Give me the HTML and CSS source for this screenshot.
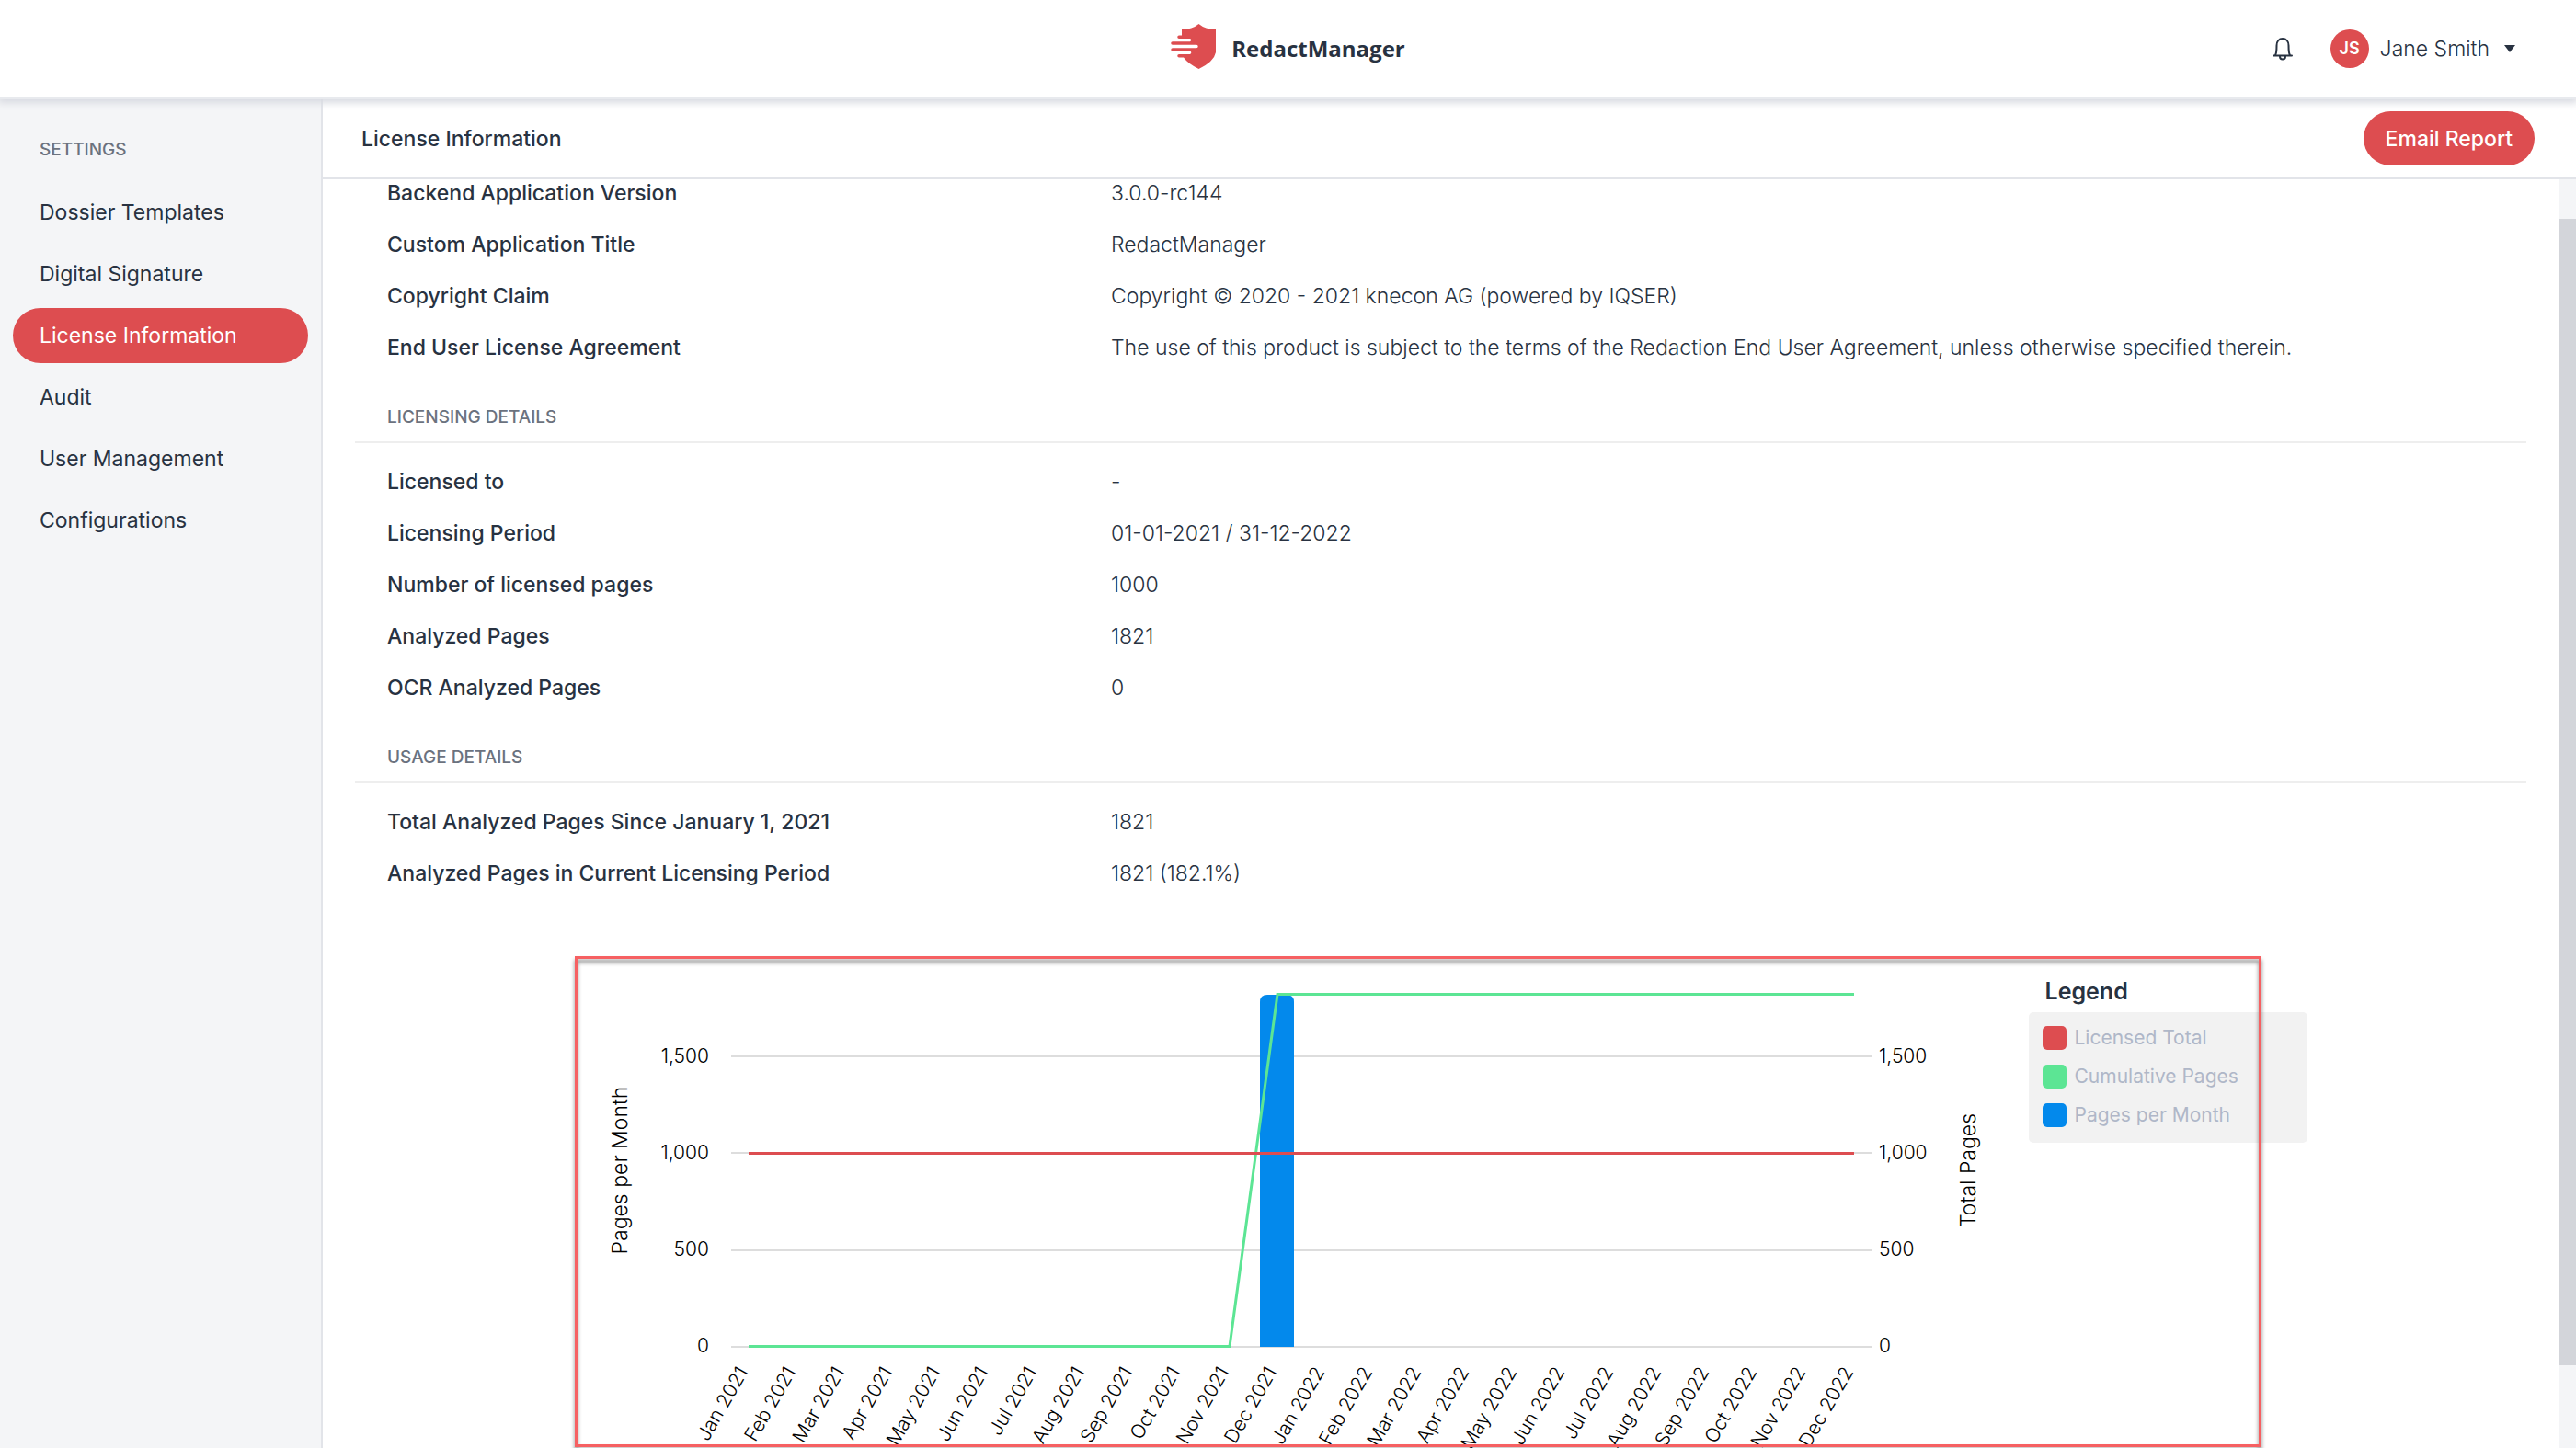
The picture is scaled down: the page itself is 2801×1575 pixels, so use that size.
FILE: index.html
```html
<!DOCTYPE html>
<html lang="en">
<head>
<meta charset="utf-8">
<title>License Information - RedactManager</title>
<link rel="stylesheet" href="styles.css">
</head>
<body>
<header class="topbar">
  <a class="brand" href="#">
    <svg class="brand-icon" viewBox="0 0 49 49" aria-hidden="true">
      <path fill="#dd4d50" d="M30.500 0Q37.500 6 49 6V31Q47 41 30.500 49Q18.500 43 14 36.500H9A1.700 1.700 0 0 1 9 33H21A1.700 1.700 0 0 0 21 29.700H2A1.700 1.700 0 0 1 2 26.200H28A1.700 1.700 0 0 0 28 22.800H2A1.700 1.700 0 0 1 2 19.200H21A1.700 1.700 0 0 0 21 16H9A1.700 1.700 0 0 1 9 12.500H12V6Q23.500 6 30.500 0Z"/>
    </svg>
    <span class="brand-name">RedactManager</span>
  </a>
  <div class="account">
    <button class="bell" type="button" aria-label="Notifications">
      <svg viewBox="0 0 24 26" width="24" height="26" fill="none" stroke="#283241" stroke-width="2" stroke-linejoin="round" stroke-linecap="round" aria-hidden="true">
        <path d="M2 20.500H22M4 20C5.500 18 5.500 15 5.500 9.500C5.500 5 8 2 12 2S18.500 5 18.500 9.500C18.500 15 18.500 18 20 20"/>
        <path d="M9 21.500A3 3 0 0 0 15 21.500"/>
      </svg>
    </button>
    <button class="user" type="button">
      <span class="avatar">JS</span>
      <span>Jane Smith</span>
      <svg class="caret" viewBox="0 0 12 8" width="12" height="8" aria-hidden="true"><path fill="#283241" d="M0 0H12L6 8Z"/></svg>
    </button>
  </div>
</header>
<div class="shell">
  <nav class="sidebar" aria-label="Settings">
    <h2 class="sidebar-title">SETTINGS</h2>
    <a class="nav-item" href="#">Dossier Templates</a>
    <a class="nav-item" href="#">Digital Signature</a>
    <a class="nav-item active" href="#" aria-current="page">License Information</a>
    <a class="nav-item" href="#">Audit</a>
    <a class="nav-item" href="#">User Management</a>
    <a class="nav-item" href="#">Configurations</a>
  </nav>
  <main class="main">
    <div class="page-header">
      <h1 class="page-title">License Information</h1>
      <button class="primary" type="button">Email Report</button>
    </div>
    <div class="viewport">
      <div class="content">
        <dl class="details">
          <dt>Backend Application Version</dt><dd>3.0.0-rc144</dd>
          <dt>Custom Application Title</dt><dd>RedactManager</dd>
          <dt>Copyright Claim</dt><dd>Copyright © 2020 - 2021 knecon AG (powered by IQSER)</dd>
          <dt>End User License Agreement</dt><dd>The use of this product is subject to the terms of the Redaction End User Agreement, unless otherwise specified therein.</dd>
        </dl>
        <h2 class="section-title">LICENSING DETAILS</h2>
        <dl class="details">
          <dt>Licensed to</dt><dd>-</dd>
          <dt>Licensing Period</dt><dd>01-01-2021 / 31-12-2022</dd>
          <dt>Number of licensed pages</dt><dd>1000</dd>
          <dt>Analyzed Pages</dt><dd>1821</dd>
          <dt>OCR Analyzed Pages</dt><dd>0</dd>
        </dl>
        <h2 class="section-title">USAGE DETAILS</h2>
        <dl class="details">
          <dt>Total Analyzed Pages Since January 1, 2021</dt><dd>1821</dd>
          <dt>Analyzed Pages in Current Licensing Period</dt><dd>1821 (182.1%)</dd>
        </dl>
        <div class="chart-area">
          <svg class="chart" viewBox="0 0 1581 540" role="img" aria-label="Pages per month and total pages">
            <g class="grid"><path d="M170 109H1410M170 214H1410M170 320H1410M170 425H1410"/></g>
            <path fill="#0389ec" d="M745 425V50Q745 42 753 42H774Q782 42 782 50V425Z"/>
            <path class="series green" d="M189 424.500H712L764 41.500H1391"/>
            <path class="series red" d="M189 214.500H1391"/>
            <g class="ticks end">
              <text x="146" y="116">1,500</text><text x="146" y="221">1,000</text><text x="146" y="326">500</text><text x="146" y="431">0</text>
            </g>
            <g class="ticks">
              <text x="1418" y="116">1,500</text><text x="1418" y="221">1,000</text><text x="1418" y="326">500</text><text x="1418" y="431">0</text>
            </g>
            <g class="axis-title">
              <text transform="translate(57 233) rotate(-90)">Pages per Month</text>
              <text transform="translate(1523 233) rotate(-90)">Total Pages</text>
            </g>
            <g class="ticks end" id="months"></g>
          </svg>
          <aside class="legend">
            <h3 class="legend-title">Legend</h3>
            <ul class="legend-list">
              <li><span class="swatch swatch-red"></span>Licensed Total</li>
              <li><span class="swatch swatch-green"></span>Cumulative Pages</li>
              <li><span class="swatch swatch-blue"></span>Pages per Month</li>
            </ul>
          </aside>
          <div class="highlight"></div>
        </div>
      </div>
      <div class="scroll-track"><div class="scroll-thumb"></div></div>
    </div>
  </main>
</div>
<script src="chart.js"></script>
</body>
</html>
```
FILE: styles.css
```css
* { box-sizing: border-box; }
body {
  margin: 0;
  height: 100vh;
  display: flex;
  flex-direction: column;
  overflow: hidden;
  background: #fff;
  color: #283241;
  font-family: Inter, "Liberation Sans", sans-serif;
  font-size: 23px;
  line-height: 28px;
}
h1, h2, h3, dl, dd, ul { margin: 0; padding: 0; }
button { border: 0; padding: 0; background: none; color: inherit; font: inherit; }
a { color: inherit; text-decoration: none; }

.topbar {
  position: relative;
  z-index: 1;
  flex: none;
  display: grid;
  grid-template-columns: 1fr auto 1fr;
  align-items: center;
  height: 108px;
  padding: 0 66px;
  background: #fff;
  border-bottom: 2px solid #e8eaee;
  box-shadow: 0 2px 8px 2px #d8dae1;
}
.brand { grid-column: 2; display: flex; align-items: center; gap: 17px; }
.brand-icon { width: 49px; height: 49px; margin-bottom: 6px; }
.brand-name { font-family: "Open Sans", sans-serif; font-weight: 700; font-size: 24px; }
.account { display: flex; justify-content: flex-end; align-items: center; gap: 40px; }
.bell, .user { display: flex; align-items: center; }
.user { gap: 12px; font-weight: 300; }
.avatar {
  width: 42px;
  height: 42px;
  border-radius: 50%;
  background: #dd4d50;
  color: #fff;
  font-size: 18px;
  font-weight: 600;
  line-height: 42px;
  text-align: center;
}
.caret { margin-left: 4px; }

.shell { flex: 1; min-height: 0; display: flex; }
.sidebar {
  flex: none;
  width: 351px;
  display: flex;
  flex-direction: column;
  gap: 7px;
  padding: 41px 14px;
  background: #f4f5f7;
  border-right: 2px solid #e2e4e9;
}
.sidebar-title { margin-bottom: 17px; padding-left: 29px; color: #6b727e; font-size: 19px; font-weight: 500; }
.nav-item { padding-left: 29px; line-height: 60px; border-radius: 30px; }
.active { background: #dd4d50; color: #fff; }

.main { flex: 1; min-width: 0; display: flex; flex-direction: column; }
.page-header {
  flex: none;
  display: flex;
  align-items: center;
  justify-content: space-between;
  height: 87px;
  padding: 0 45px 0 42px;
  border-bottom: 2px solid #e2e4e9;
}
.page-title { font-size: 23px; font-weight: 500; }
.primary { height: 59px; padding: 0 24px; border-radius: 30px; background: #dd4d50; color: #fff; font-weight: 500; }

.viewport { flex: 1; min-height: 0; display: flex; }
.content { flex: 1; min-width: 0; padding-top: 1px; overflow: hidden; }
.details { display: grid; grid-template-columns: 1fr 2fr; row-gap: 28px; padding-left: 70px; }
.details dt { font-weight: 500; }
.details dd { font-weight: 300; }
.section-title {
  margin: 48px 35px 28px;
  padding: 0 35px 12px;
  border-bottom: 2px solid #eee;
  color: #6b727e;
  font-size: 19px;
  font-weight: 500;
}

.chart-area { position: relative; display: flex; width: 1884px; max-width: 100%; margin: 76px auto 0; }
.chart { flex: 1; min-width: 0; overflow: visible; }
.grid { stroke: #ddd; stroke-width: 2; }
.series { fill: none; stroke-width: 3; }
.green { stroke: #5ce594; }
.red { stroke: #dd4d50; }
.ticks { fill: #000; font-size: 21px; font-weight: 300; }
.end { text-anchor: end; }
.axis-title { fill: #000; font-size: 23px; font-weight: 300; text-anchor: middle; }

.legend { flex: none; width: 303px; padding-top: 24px; }
.legend-title { padding-left: 18px; font-size: 25px; font-weight: 600; }
.legend-list {
  display: grid;
  gap: 14px;
  margin-top: 9px;
  padding: 14px 15px 16px;
  border-radius: 5px;
  background: #f2f2f2;
  color: #afb7c8;
  font-size: 21px;
  list-style: none;
}
.legend-list li { display: flex; align-items: center; gap: 9px; }
.swatch { width: 26px; height: 26px; border-radius: 5px; }
.swatch-red { background: #dd4d50; }
.swatch-green { background: #5ce594; }
.swatch-blue { background: #0389ec; }
.highlight {
  position: absolute;
  inset: 0 50px auto 0;
  height: 534px;
  border: 3px solid #f66062;
  filter: drop-shadow(0 4px 2px rgba(0, 0, 0, .5));
}

.scroll-track { flex: none; width: 19px; padding: 43px 0 90px; background: #f4f5f7; }
.scroll-thumb { height: 100%; background: #d3d5da; }
```
FILE: chart.js
```javascript
const names = ["Jan", "Feb", "Mar", "Apr", "May", "Jun", "Jul", "Aug", "Sep", "Oct", "Nov", "Dec"];
const group = document.getElementById("months");
for (let i = 0; i < 24; i++) {
  const label = document.createElementNS("http://www.w3.org/2000/svg", "text");
  const x = Math.round(189 + i * 1202 / 23);
  label.setAttribute("transform", `translate(${x} 452) rotate(-60)`);
  label.textContent = `${names[i % 12]} ${i < 12 ? 2021 : 2022}`;
  group.append(label);
}
```
